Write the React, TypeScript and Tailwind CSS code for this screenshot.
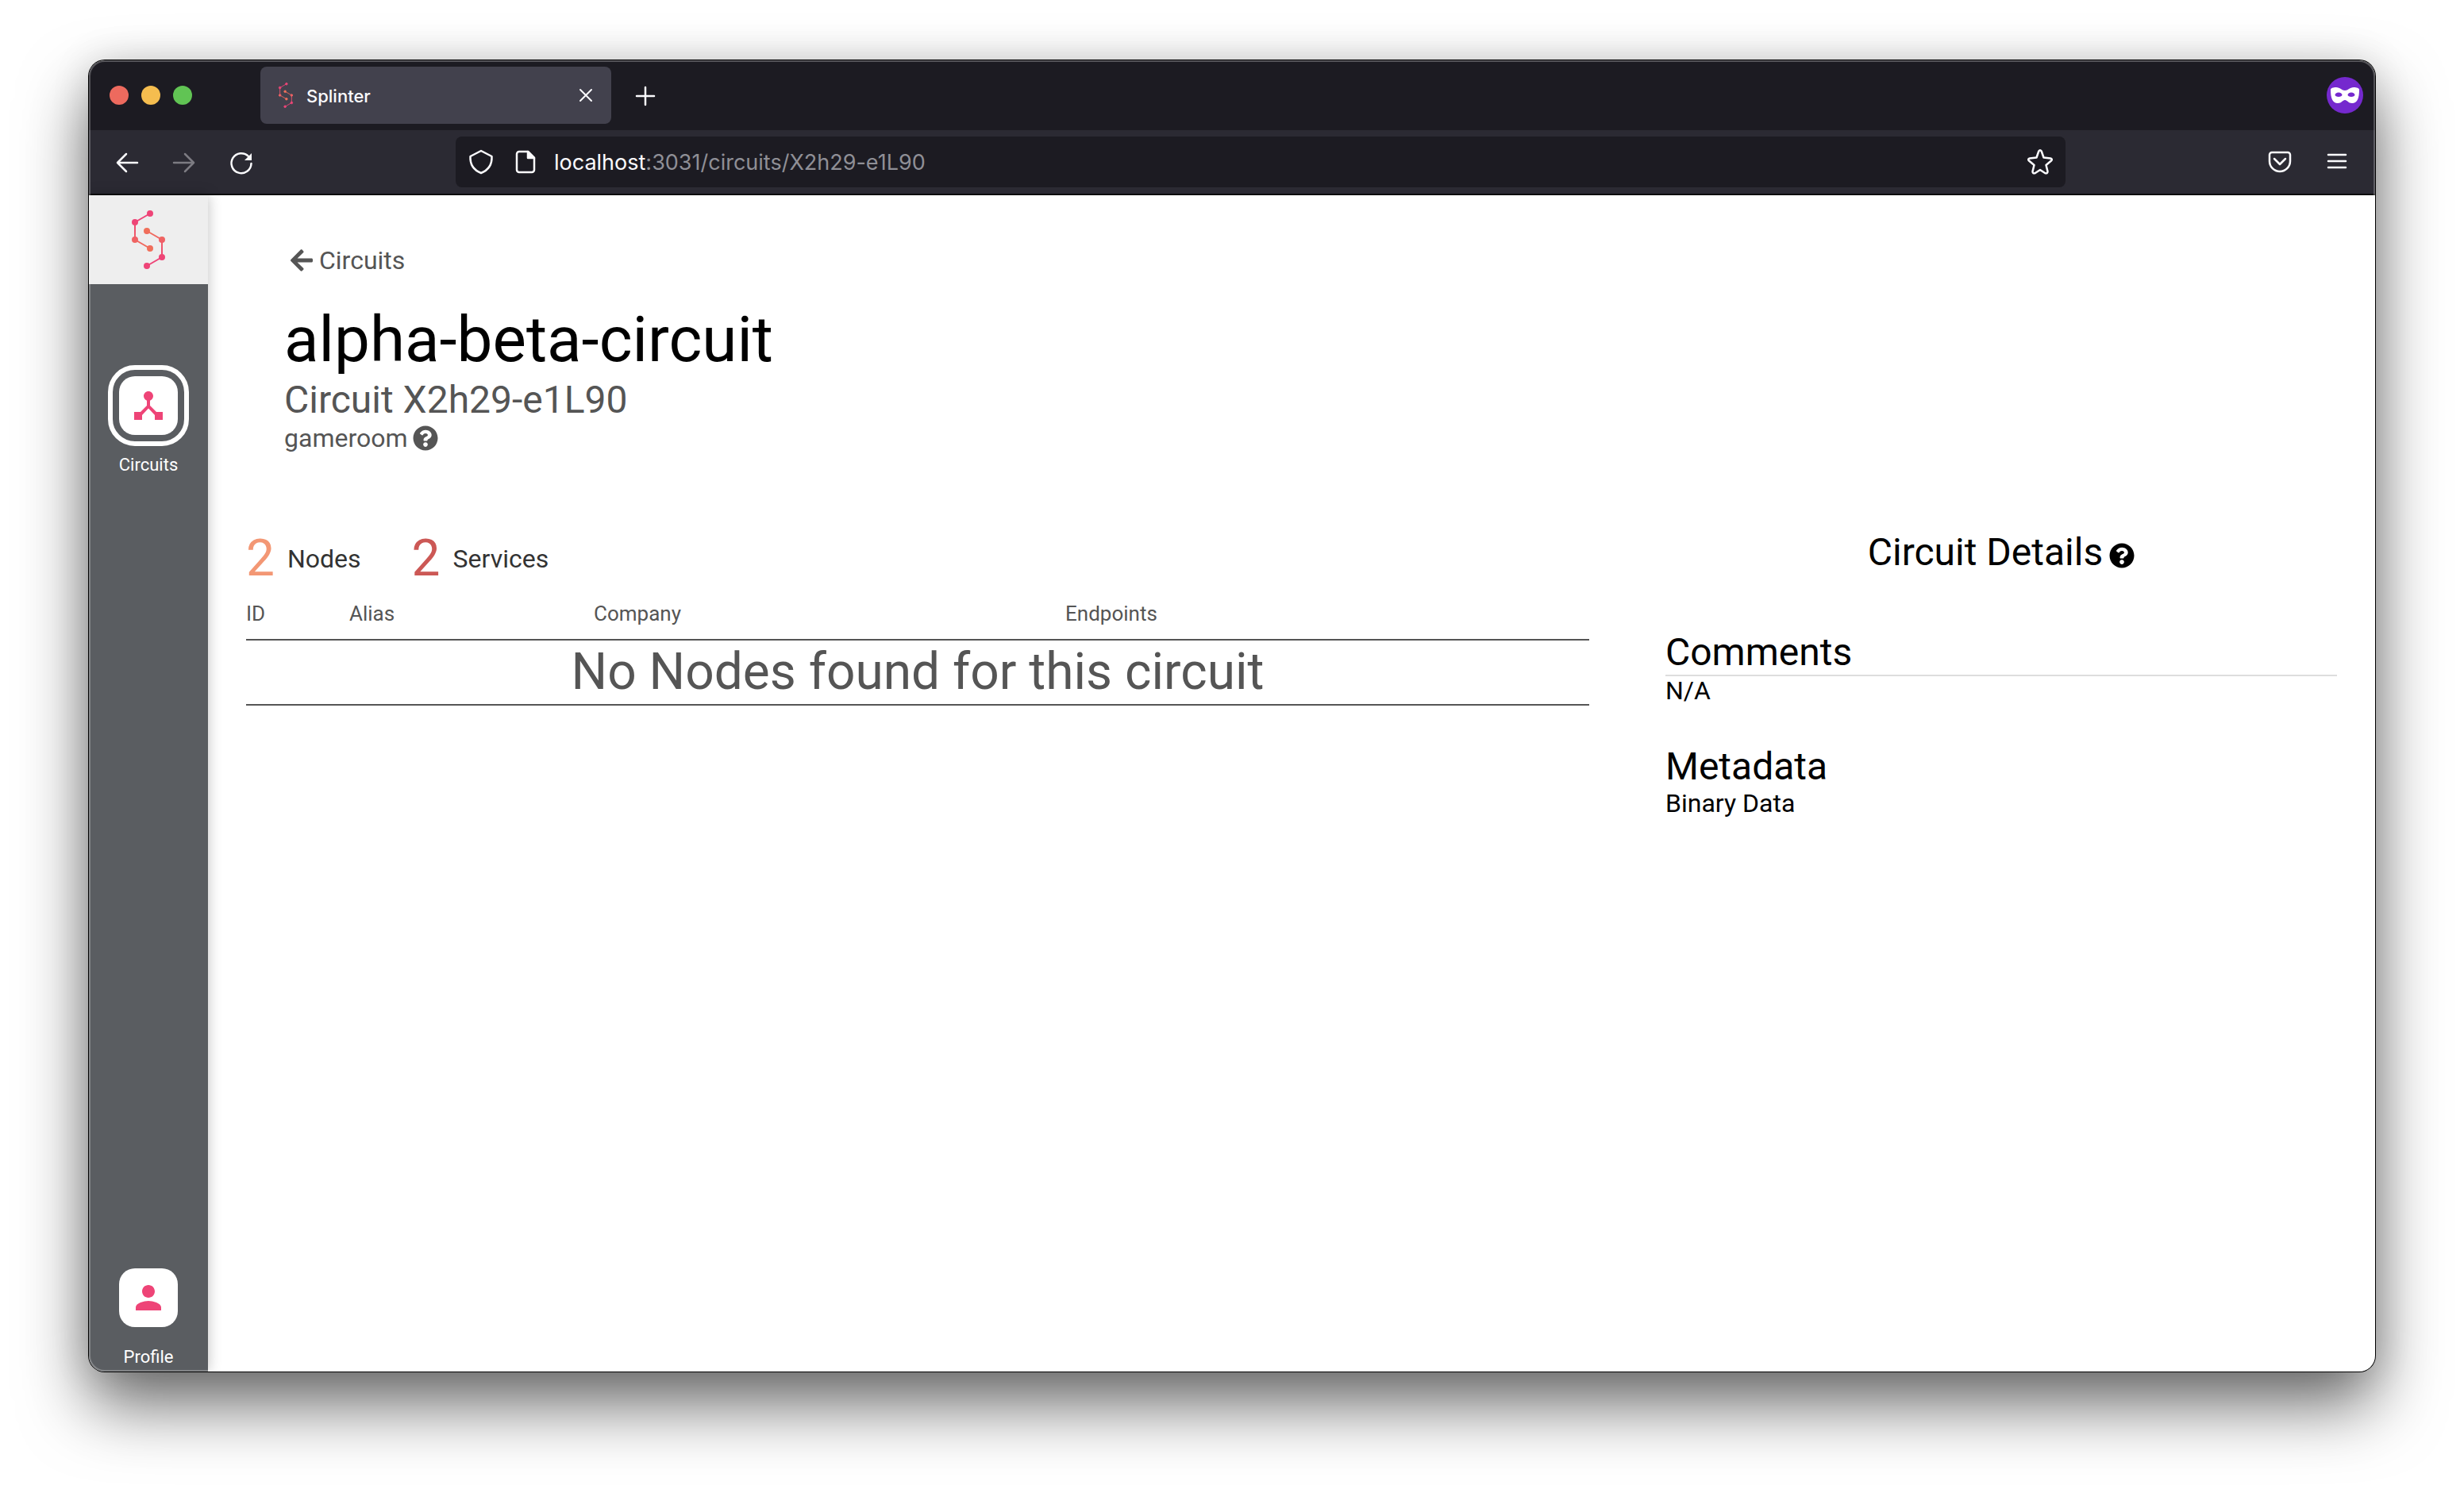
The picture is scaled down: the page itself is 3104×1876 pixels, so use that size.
import React from 'react';
import { FaArrowLeft, FaQuestionCircle } from 'react-icons/fa';
import { MdDeviceHub, MdPerson } from 'react-icons/md';

const SplinterLogo: React.FC<{ className?: string; id: string }> = ({ className, id }) => (
  <svg viewBox="0 0 42 74" className={className} fill="none" aria-hidden="true">
    <defs>
      <linearGradient id={`${id}-a`} gradientUnits="userSpaceOnUse" x1="0" y1="15" x2="0" y2="48">
        <stop stopColor="#ee4477" />
        <stop offset="1" stopColor="#f0705a" />
      </linearGradient>
      <linearGradient id={`${id}-b`} gradientUnits="userSpaceOnUse" x1="0" y1="26" x2="0" y2="59">
        <stop stopColor="#f0705a" />
        <stop offset="1" stopColor="#ee4477" />
      </linearGradient>
    </defs>
    <g stroke={`url(#${id}-a)`} fill={`url(#${id}-a)`} strokeWidth="2">
      <path d="M23 4L4 15V37L23 48" fill="none" />
      <circle cx="23" cy="4" r="3" />
      <circle cx="4" cy="15" r="3" />
      <circle cx="4" cy="37" r="3" />
      <circle cx="23" cy="48" r="3" />
    </g>
    <g stroke={`url(#${id}-b)`} fill={`url(#${id}-b)`} strokeWidth="2">
      <path d="M19 26L38 37V59L19 70" fill="none" />
      <circle cx="19" cy="26" r="3" />
      <circle cx="38" cy="37" r="3" />
      <circle cx="38" cy="59" r="3" />
      <circle cx="19" cy="70" r="3" />
    </g>
  </svg>
);

interface IconProps {
  children: React.ReactNode;
  className?: string;
}

// 32-unit grid used by all browser chrome icons
const ChromeIcon: React.FC<IconProps> = ({ children, className = 'size-8' }) => (
  <svg
    viewBox="0 0 32 32"
    className={className}
    fill="none"
    stroke="currentColor"
    strokeWidth="2.5"
    strokeLinecap="round"
    strokeLinejoin="round"
    aria-hidden="true"
  >
    {children}
  </svg>
);

const TabBar: React.FC = () => (
  <div className="flex items-center h-[88px] bg-[#1c1b22] pl-[26px] pr-[15px]">
    <div className="flex gap-4">
      <button aria-label="Close window" className="size-6 rounded-full bg-[#ed6a5e]" />
      <button aria-label="Minimize window" className="size-6 rounded-full bg-[#f5bd4f]" />
      <button aria-label="Zoom window" className="size-6 rounded-full bg-[#61c454]" />
    </div>
    <div className="ml-[86px] flex items-center w-[442px] h-[72px] rounded-lg bg-[#42414d] pl-4 pr-4">
      <SplinterLogo id="favicon" className="w-8 h-8" />
      <span className="ml-2.5 flex-1 pt-0.5 text-[22px] font-medium text-[#fbfbfe]">Splinter</span>
      <button aria-label="Close tab" className="text-[#fbfbfe]">
        <ChromeIcon>
          <path d="M9 9L23 23M23 9L9 23" strokeWidth="2" />
        </ChromeIcon>
      </button>
    </div>
    <button aria-label="New tab" className="ml-[27px] pt-0.5 text-[#fbfbfe]">
      <ChromeIcon>
        <path d="M16 5V27M5 16H27" />
      </ChromeIcon>
    </button>
    <div className="ml-auto">
      <svg viewBox="0 0 46 46" className="size-[46px]" aria-label="Private browsing" role="img">
        <circle cx="23" cy="23" r="23" fill="#7529ce" />
        <path
          fill="#fff"
          fillRule="evenodd"
          d="M12 13C17 13 19 17 23 17S29 13 34 13C38 13 41 14 41 16C41 26 39 33 32 33C27 33 26 29 23 29S19 33 14 33C7 33 5 26 5 16C5 14 8 13 12 13ZM15 19.500C12.500 19.500 10.500 21 10.500 22.500S12.500 25 15 25S19.500 24 19.500 22.500S17.500 19.500 15 19.500ZM31 19.500C28.500 19.500 26.500 21 26.500 22.500S28.500 25 31 25S35.500 24 35.500 22.500S33.500 19.500 31 19.500Z"
        />
      </svg>
    </div>
  </div>
);

const AddressBar: React.FC = () => (
  <div className="flex items-center h-[82px] bg-[#2b2a33] border-b-2 border-[#0c0c0d] pl-8 pr-8 text-[#fbfbfe]">
    <div className="flex gap-10 pt-0.5">
      <button aria-label="Back">
        <ChromeIcon>
          <path d="M29 16H4M15 5L4 16L15 27" />
        </ChromeIcon>
      </button>
      <button aria-label="Forward" disabled className="text-[#7c7b82]">
        <ChromeIcon>
          <path d="M3 16H28M17 5L28 16L17 27" />
        </ChromeIcon>
      </button>
      <button aria-label="Reload">
        <ChromeIcon>
          <path d="M28.500 17A12.500 12.500 0 1 1 25 8" />
          <path d="M29 4V13H20Z" fill="currentColor" stroke="none" />
        </ChromeIcon>
      </button>
    </div>
    <div className="mx-[254px] flex-1 flex items-center h-16 rounded-lg bg-[#1c1b22] px-4">
      <ChromeIcon>
        <path d="M16 2L29.500 9C30 19 26 26 16 30C6 26 2 19 2.500 9Z" />
      </ChromeIcon>
      <ChromeIcon className="size-8 ml-6">
        <path d="M8 3H19L27 11V26A3 3 0 0 1 24 29H8A3 3 0 0 1 5 26V6A3 3 0 0 1 8 3Z" />
        <path d="M19 3V11H27Z" fill="currentColor" />
      </ChromeIcon>
      <p className="ml-5 flex-1 pt-0.5 text-[27px] text-[#8f8f96]">
        <span className="text-[#fbfbfe]">localhost</span>:3031/circuits/X2h29-e1L90
      </p>
      <button aria-label="Bookmark this page">
        <ChromeIcon>
          <path d="M14.300 2.500Q16 0 17.700 2.500L20.500 10.500L29 11.500Q32 12.500 30 14.500L23.500 20L25.500 28Q25.500 31 22.500 30.200L16 26L9.500 30.200Q6.500 31 6.500 28L8.500 20L2 14.500Q0 12.500 3 11.500L11.500 10.500Z" />
        </ChromeIcon>
      </button>
    </div>
    <div className="flex gap-10">
      <button aria-label="Save to Pocket">
        <ChromeIcon>
          <path d="M6 4H26A3 3 0 0 1 29 7V15A13 13 0 0 1 3 15V7A3 3 0 0 1 6 4Z" />
          <path d="M9 12L16 19L23 12" />
        </ChromeIcon>
      </button>
      <button aria-label="Open application menu">
        <ChromeIcon>
          <path d="M5 7H27M5 15H27M5 23H27" />
        </ChromeIcon>
      </button>
    </div>
  </div>
);

const Sidebar: React.FC = () => (
  <nav className="relative z-10 flex flex-col w-[150px] shrink-0 bg-[#5a5d61] shadow-[0_0_16px_rgba(0,0,0,0.25)] text-white text-[22px] leading-6">
    <a href="/" aria-label="Splinter" className="flex items-center justify-center h-28 bg-[#eeeeee]">
      <SplinterLogo id="logo" className="w-[42px] h-[74px]" />
    </a>
    <a href="/circuits" className="mt-[102px] flex flex-col items-center gap-3">
      <span className="p-2 rounded-[34px] border-6 border-white">
        <span className="flex items-center justify-center size-[74px] rounded-[20px] bg-white">
          <MdDeviceHub size={48} className="text-[#ee4477]" />
        </span>
      </span>
      Circuits
    </a>
    <a href="/profile" className="mt-auto pb-1.5 flex flex-col items-center gap-[26px]">
      <span className="flex items-center justify-center size-[74px] rounded-[20px] bg-white">
        <MdPerson size={48} className="text-[#ee4477]" />
      </span>
      Profile
    </a>
  </nav>
);

const NodesTable: React.FC = () => (
  <table className="w-full table-fixed text-[#555555]">
    <thead>
      <tr className="border-b-2 border-[#555555] text-left text-[26px] leading-8">
        <th className="w-[130px] pb-4 font-normal">ID</th>
        <th className="w-[308px] pb-4 font-normal">Alias</th>
        <th className="w-[594px] pb-4 font-normal">Company</th>
        <th className="pb-4 font-normal">Endpoints</th>
      </tr>
    </thead>
    <tbody>
      <tr className="border-b-2 border-[#555555]">
        <td colSpan={4} className="text-center text-[64px] leading-20">
          No Nodes found for this circuit
        </td>
      </tr>
    </tbody>
  </table>
);

const CircuitPage: React.FC = () => (
  <main className="flex-1 px-12 pt-[62px] text-black">
    <header className="pl-12 text-[#555555] text-[32px] leading-10">
      <a href="/circuits" className="inline-flex items-center gap-1.5 pl-1.5">
        <FaArrowLeft size={32} />
        Circuits
      </a>
      <h1 className="mt-[27px] text-[80px] leading-24 text-black">alpha-beta-circuit</h1>
      <h2 className="text-5xl leading-14">Circuit X2h29-e1L90</h2>
      <div className="flex items-center gap-1.5">
        gameroom
        <FaQuestionCircle size={32} />
      </div>
    </header>

    <div className="mt-24 flex items-start gap-24">
      <section className="flex-[2]">
        <div className="flex gap-16 mb-[17px] text-[32px] text-[#333333]">
          <div className="flex items-center gap-4">
            <span className="text-[64px] leading-18 text-[#f39774]">2</span>
            Nodes
          </div>
          <div className="flex items-center gap-4">
            <span className="text-[64px] leading-18 text-[#cc5855]">2</span>
            Services
          </div>
        </div>
        <NodesTable />
      </section>

      <section className="flex-1 text-[32px] leading-9">
        <h2 className="flex items-center justify-center gap-2 text-5xl leading-14">
          Circuit Details
          <FaQuestionCircle size={32} className="mt-2" />
        </h2>
        <div className="mt-[70px]">
          <h3 className="text-5xl leading-14 border-b-2 border-[#dddddd]">Comments</h3>
          <p>N/A</p>
        </div>
        <div className="mt-[50px]">
          <h3 className="text-5xl leading-14">Metadata</h3>
          <p>Binary Data</p>
        </div>
      </section>
    </div>
  </main>
);

const App: React.FC = () => (
  <div className="min-h-screen flex px-28 pt-[76px] pb-[148px] bg-white">
    <div className="relative flex-1 flex flex-col rounded-[20px] overflow-hidden bg-white shadow-[0_0_0_1px_#000,0_0_50px_rgba(0,0,0,0.12),0_42px_84px_rgba(0,0,0,0.58)]">
      <div className="font-[Inter,sans-serif]">
        <TabBar />
        <AddressBar />
      </div>
      <div className="flex-1 flex font-[Roboto,sans-serif]">
        <Sidebar />
        <CircuitPage />
      </div>
      {/* light rim along the window edge */}
      <div className="absolute inset-0 z-20 rounded-[20px] border-2 border-white/25 pointer-events-none" />
    </div>
  </div>
);

export default App;
